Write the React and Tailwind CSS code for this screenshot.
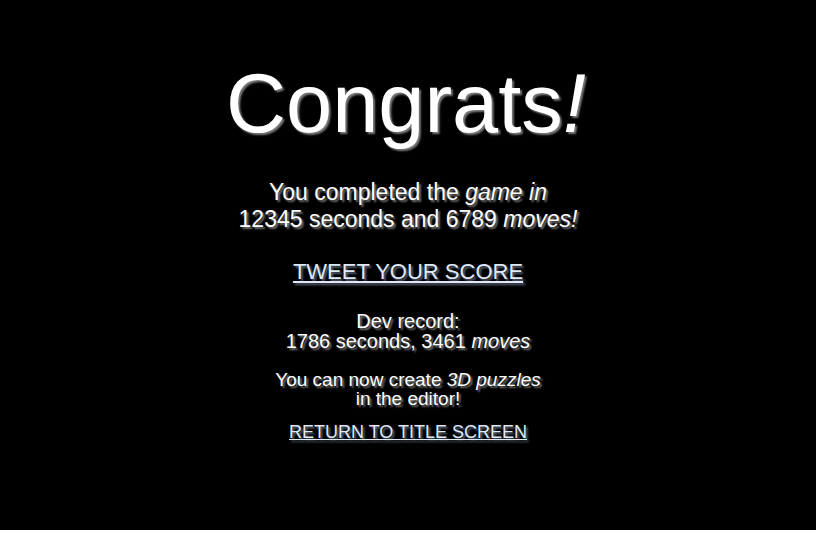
export default function App() {
  const shadow = '[text-shadow:2px_2px_2px_#7a7a7a]';
  return (
    <div className="w-[816px] h-[533px] bg-white">
      <div
        className="h-[530px] bg-black flex flex-col items-center text-white text-center pt-[62px]"
        style={{ fontFamily: '"Liberation Sans", Arial, sans-serif' }}
      >
        <h1 className={`text-[83px] leading-[84px] pr-[4px] ${shadow}`}>
          Congrats<i>!</i>
        </h1>

        <p className={`mt-[33px] text-[23px] leading-[27px] ${shadow}`}>
          You completed the <i>game in</i>
          <br />
          12345 seconds and 6789 <i>moves!</i>
        </p>

        <a
          href="#"
          className="mt-[27px] text-[22px] leading-[24px] underline text-[#dfe9f7] [text-shadow:2px_2px_2px_#5a6478]"
        >
          TWEET YOUR SCORE
        </a>

        <p className={`mt-[27px] text-[20px] leading-[20px] ${shadow}`}>
          Dev record:
          <br />
          1786 seconds, 3461 <i>moves</i>
        </p>

        <p className={`mt-[19px] text-[19px] leading-[19px] ${shadow}`}>
          You can now create <i>3D puzzles</i>
          <br />
          in the editor!
        </p>

        <a
          href="#"
          className="mt-[14px] text-[18px] leading-[20px] underline text-[#dfe9f7] [text-shadow:2px_2px_2px_#5a6478]"
        >
          RETURN TO TITLE SCREEN
        </a>
      </div>
    </div>
  );
}
